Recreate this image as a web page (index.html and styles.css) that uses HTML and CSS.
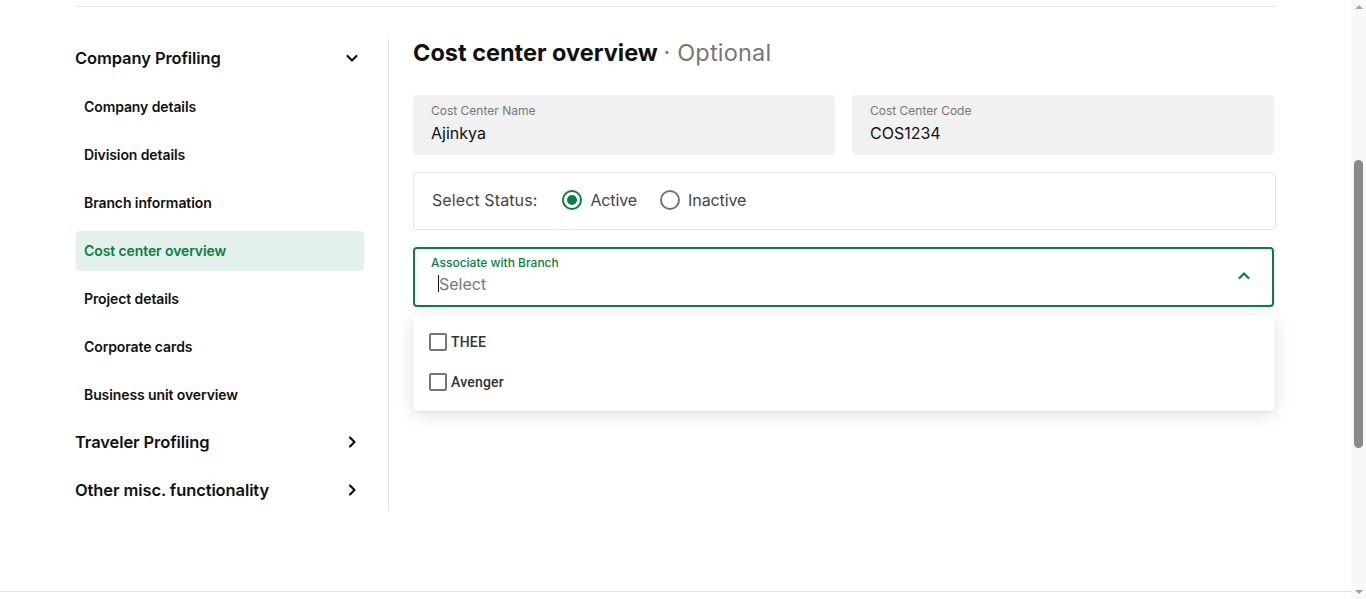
FILE: index.html
```html
<!DOCTYPE html>
<html lang="en">
<head>
<meta charset="utf-8">
<title>Cost center overview</title>
<link rel="stylesheet" href="styles.css">
</head>
<body>
<div class="viewport">
  <div class="page">
    <div class="container">
      <div class="topline"></div>
      <div class="layout">
        <aside class="sidebar">
          <div class="group-head">
            <span>Company Profiling</span>
            <svg class="chev" viewBox="0 0 24 24" width="24" height="24"><path d="M7.5 10l4.5 4.5 4.5-4.5" fill="none" stroke="#111" stroke-width="2.2" stroke-linecap="round" stroke-linejoin="round"/></svg>
          </div>
          <div class="nav-item">Company details</div>
          <div class="nav-item">Division details</div>
          <div class="nav-item">Branch information</div>
          <div class="nav-item active">Cost center overview</div>
          <div class="nav-item">Project details</div>
          <div class="nav-item">Corporate cards</div>
          <div class="nav-item">Business unit overview</div>
          <div class="group-head">
            <span>Traveler Profiling</span>
            <svg class="chev" viewBox="0 0 24 24" width="24" height="24"><path d="M10 7.5l4.5 4.5-4.5 4.5" fill="none" stroke="#111" stroke-width="2.2" stroke-linecap="round" stroke-linejoin="round"/></svg>
          </div>
          <div class="group-head">
            <span>Other misc. functionality</span>
            <svg class="chev" viewBox="0 0 24 24" width="24" height="24"><path d="M10 7.5l4.5 4.5-4.5 4.5" fill="none" stroke="#111" stroke-width="2.2" stroke-linecap="round" stroke-linejoin="round"/></svg>
          </div>
        </aside>
        <main class="main">
          <h1 class="title">Cost center overview <span class="opt">· Optional</span></h1>
          <div class="fields">
            <div class="field">
              <div class="field-label">Cost Center Name</div>
              <div class="field-value">Ajinkya</div>
            </div>
            <div class="field">
              <div class="field-label">Cost Center Code</div>
              <div class="field-value">COS1234</div>
            </div>
          </div>
          <div class="status">
            <span class="status-label">Select Status:</span>
            <label class="radio"><span class="dot on"></span>Active</label>
            <label class="radio"><span class="dot"></span>Inactive</label>
          </div>
          <div class="select-wrap">
            <div class="select">
              <div class="select-text">
                <div class="select-label">Associate with Branch</div>
                <div class="select-value"><span class="caret"></span>Select</div>
              </div>
              <svg class="up" viewBox="0 0 24 24" width="24" height="24"><path d="M7.5 14l4.5-4.5 4.5 4.5" fill="none" stroke="#0b7d45" stroke-width="2.2" stroke-linecap="round" stroke-linejoin="round"/></svg>
            </div>
            <div class="menu">
              <div class="opt-row"><span class="box"></span>THEE</div>
              <div class="opt-row"><span class="box"></span>Avenger</div>
            </div>
          </div>
        </main>
      </div>
    </div>
    <div class="footer"></div>
  </div>
  <div class="scrollbar">
    <span class="arr up-arr"></span>
    <div class="track"><div class="thumb"></div></div>
    <span class="arr down-arr"></span>
  </div>
</div>
</body>
</html>
```

FILE: styles.css
```css
* { box-sizing: border-box; }
html, body { margin: 0; padding: 0; }
body {
  font-family: "Inter", "Noto Sans", sans-serif;
  color: #111;
  background: #fff;
}
.viewport {
  display: flex;
  height: 599px;
  overflow: hidden;
}
.page {
  flex: 1;
  display: flex;
  flex-direction: column;
}
.container {
  flex: 1;
  padding: 6px 75px 0;
}
.topline {
  border-top: 1px solid #e6e6e6;
}
.layout {
  display: flex;
  margin-top: 32px;
  align-items: flex-start;
}
.sidebar {
  width: 314px;
  padding-right: 24px;
  border-right: 1px solid #e3e3e3;
  display: flex;
  flex-direction: column;
  gap: 8px;
}
.group-head {
  height: 40px;
  display: flex;
  align-items: center;
  justify-content: space-between;
  padding-bottom: 2px;
  font-size: 16.5px;
  font-weight: 600;
  letter-spacing: -0.1px;
  color: #111;
}
.chev { display: block; }
.nav-item {
  height: 40px;
  display: flex;
  align-items: center;
  padding-left: 9px;
  padding-bottom: 2px;
  font-size: 14px;
  font-weight: 600;
  letter-spacing: -0.1px;
  color: #111;
  border-radius: 4px;
}
.nav-item.active {
  background: #e4f1ea;
  color: #0b7d45;
  margin-left: 1px;
  padding-left: 8px;
}
.main {
  flex: 1;
  margin-left: 24px;
}
.title {
  margin: 0;
  height: 30px;
  line-height: 28px;
  font-size: 23.5px;
  font-weight: 700;
  letter-spacing: 0;
  color: #111;
}
.opt {
  font-weight: 400;
  color: #777;
  letter-spacing: 0.2px;
}
.fields {
  margin-top: 26px;
  display: grid;
  grid-template-columns: 1fr 1fr;
  gap: 17px;
  padding-right: 2px;
}
.field {
  height: 60px;
  background: #f1f1f1;
  border-radius: 4px;
  padding: 8px 18px 0;
}
.field-label {
  font-size: 12px;
  color: #777;
  line-height: 16px;
}
.field-value {
  font-size: 16px;
  color: #111;
  line-height: 20px;
  margin-top: 4px;
}
.status {
  margin-top: 17px;
  height: 58px;
  border: 1px solid #e3e3e3;
  border-radius: 4px;
  display: flex;
  align-items: center;
  padding-left: 18px;
  padding-bottom: 3px;
  font-size: 16px;
  color: #444;
}
.status-label { margin-right: 25px; letter-spacing: 0.1px; }
.radio {
  display: flex;
  align-items: center;
  gap: 8px;
  margin-right: 23px;
  letter-spacing: -0.1px;
}
.dot {
  width: 20px;
  height: 20px;
  border-radius: 50%;
  border: 2px solid #757575;
  position: relative;
  margin-top: 1px;
}
.dot.on { border-color: #0b7d45; }
.dot.on::after {
  content: "";
  position: absolute;
  left: 3px; top: 3px;
  width: 10px; height: 10px;
  border-radius: 50%;
  background: #0b7d45;
}
.select-wrap {
  margin-top: 17px;
  position: relative;
  padding-right: 2px;
}
.select {
  height: 60px;
  border: 2px solid #0b7d45;
  border-radius: 4px;
  display: flex;
  align-items: center;
  justify-content: space-between;
  padding: 0 16px 0 16px;
}
.select-text { margin-top: -6px; }
.select-label {
  font-size: 12px;
  font-weight: 500;
  color: #0b7d45;
  line-height: 16px;
}
.select-value {
  margin-top: 3px;
  padding-left: 7px;
  font-size: 16px;
  color: #777;
  line-height: 20px;
  display: flex;
  align-items: center;
}
.caret {
  width: 1px;
  height: 17px;
  background: #111;
}
.up { display: block; margin-top: -2px; }
.menu {
  position: absolute;
  left: 0;
  right: 1px;
  top: 68px;
  height: 96px;
  background: #fff;
  border-radius: 4px;
  box-shadow: 0 4px 18px rgba(0,0,0,0.12), 0 1px 3px rgba(0,0,0,0.06);
  padding-top: 7px;
  font-family: "Roboto", "Liberation Sans", sans-serif;
}
.opt-row {
  height: 40px;
  display: flex;
  align-items: center;
  padding-left: 16px;
  font-size: 14px;
  font-weight: 500;
  color: #333;
  gap: 4px;
  letter-spacing: 0.2px;
}
.box {
  width: 18px;
  height: 18px;
  border: 2px solid #757575;
  border-radius: 2px;
}
.footer {
  height: 8px;
  border-top: 1px solid #e3e3e3;
}
.scrollbar {
  width: 15px;
  background: #f8f8f8;
  display: flex;
  flex-direction: column;
  align-items: center;
}
.arr {
  width: 0; height: 0;
  border-left: 4px solid transparent;
  border-right: 4px solid transparent;
  margin: 5px 0;
}
.up-arr { border-bottom: 4px solid #a3a3a3; }
.down-arr { border-top: 4px solid #a3a3a3; }
.track {
  flex: 1;
  width: 100%;
  display: flex;
  justify-content: center;
  padding-top: 146px;
}
.thumb {
  width: 9px;
  height: 288px;
  background: #8a8a8a;
  border-radius: 5px;
}
```
